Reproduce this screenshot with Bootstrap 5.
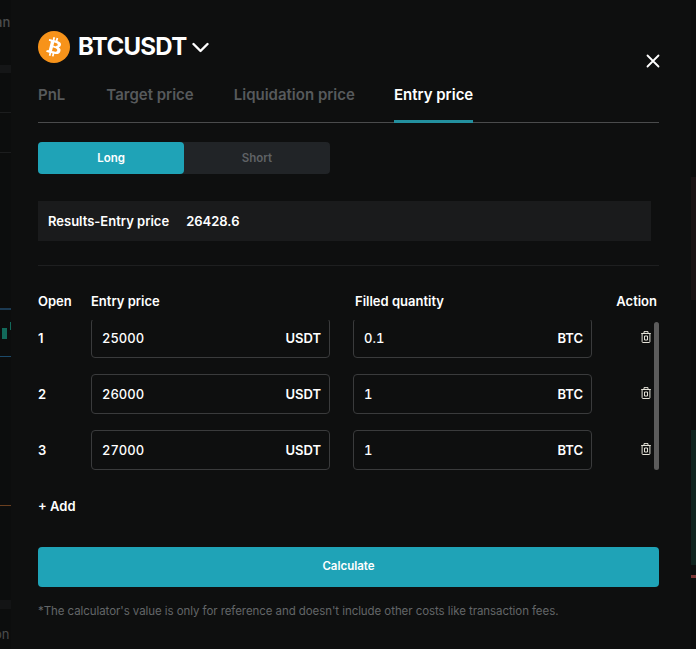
<!DOCTYPE html>
<html lang="en">
<head>
<meta charset="utf-8">
<link href="https://cdn.jsdelivr.net/npm/bootstrap@5.3.0/dist/css/bootstrap.min.css" rel="stylesheet">
<style>
html,body{height:649px;overflow:hidden}
body{background:#0c0d0d;font-family:Inter,"Liberation Sans",sans-serif;color:#fff;font-weight:600;position:relative}
.calc-panel{position:relative;width:680px;height:649px;margin-left:11px;background:#0e0f0f;padding:29px 32px 0 27px}
.behind{position:absolute;display:block}
.bg-an{left:-5px;top:13px;font-size:13px;line-height:18px;color:#4b4c4d;font-weight:500}
.bg-on{left:-6px;top:625px;font-size:13px;line-height:18px;color:#4b4c4d;font-weight:400}
.bg-band-a{left:0;top:65px;width:11px;height:8px;background:#151617}
.bg-line-a{left:0;top:112px;width:11px;height:1px;background:#1c1d1e}
.bg-line-b{left:0;top:152px;width:11px;height:1px;background:#1c1d1e}
.bg-blue-a{left:0;top:308px;width:11px;height:2px;background:#1c3a52}
.bg-blue-b{left:0;top:356px;width:11px;height:1px;background:#1c4a6a}
.bg-candle{left:2px;top:328px;width:5px;height:11px;background:#12695a}
.bg-wick{left:10px;top:322px;width:1px;height:8px;background:#12695a}
.bg-orange{left:0;top:505px;width:11px;height:1px;background:#6a3f1f}
.bg-band-b{left:0;top:600px;width:11px;height:9px;background:#131415}
.bg-red-zone{right:0;top:177px;width:5px;height:123px;background:#1a1314}
.bg-green-zone{right:0;top:430px;width:5px;height:135px;background:#10241f}
.bg-red-tick{right:0;top:575px;width:5px;height:3px;background:#7a3535}
.coin-logo{width:32px;height:32px}
.coin-name{font-size:24px;line-height:36px;font-weight:700;letter-spacing:-.7px;margin:0 0 0 8px}
.close-x{right:-1px;top:25px;background:none;border:0;padding:0;line-height:0}
.panel-head{position:relative}
.tab-row{border-bottom:1px solid #4a4b4c;gap:40px;margin-top:15px;height:43px}
.tab-item{font-size:15px;color:#575a5c;line-height:24px;padding:3px 0 0;height:43px;border-bottom:3px solid transparent;margin-bottom:-1px}
.tab-item:first-child{margin-right:1px}
.tab-item:nth-child(3){margin-right:-1px}
.tab-item.on{color:#fff;border-color:#23909f}
.side-switch{width:292px;height:32px;margin-top:19px;background:#212427;border-radius:4px}
.side-opt{flex:1;font-size:11.500px;line-height:32px;text-align:center;color:#5f6265;border-radius:4px}
.side-opt.on{background:#1fa3b7;color:#fff}
.result-bar{height:40px;width:613px;margin-top:27px;background:#1a1b1c;padding:0 10px;font-size:13px;line-height:40px;gap:17px}
.soft-rule{height:1px;background:#1e1f20;margin-top:24px}
.head-row{font-size:13px;line-height:20px;margin-top:25px}
.col-open{width:53px;flex:none}
.calc-line .col-open{padding-top:2px}
.col-price{width:264px;flex:none}
.col-qty{width:237px;flex:none}
.col-act{flex:1;text-align:right;padding-right:2px}
.rows-box{height:150px;overflow:hidden;position:relative;margin-top:9px}
.calc-line{height:56px;font-size:13px;margin-top:-8px;margin-bottom:8px}
.calc-line:first-child{margin-top:-10px}
.amount-box{height:40px;width:239px;border:1px solid #3a3b3c;border-radius:4px;padding:2px 8px 0 10px;font-weight:500;font-variant-numeric:tabular-nums}
.amount-box b{font-weight:600}
.price-wrap{width:262px;flex:none}
.bin{width:10px;height:12px;margin-left:49px;margin-top:-2px}
.thumb{position:absolute;right:0;top:2px;width:5px;height:148px;background:#5c5c5c;border-radius:3px}
.add-row{font-size:13px;line-height:20px;margin-top:26px}
.calc-btn{display:block;width:621px;height:40px;margin-top:31px;background:#1fa3b7;border:0;border-radius:4px;color:#fff;font-size:11.500px;font-weight:600;padding:0}
.foot-note{font-size:11.500px;font-weight:400;letter-spacing:-.07px;color:#636668;line-height:16px;margin:16px 0 0}
</style>
</head>
<body>
<span class="behind bg-an">an</span>
<span class="behind bg-on">on</span>
<i class="behind bg-band-a"></i><i class="behind bg-line-a"></i><i class="behind bg-line-b"></i>
<i class="behind bg-blue-a"></i><i class="behind bg-blue-b"></i><i class="behind bg-candle"></i><i class="behind bg-wick"></i>
<i class="behind bg-orange"></i><i class="behind bg-band-b"></i>
<i class="behind bg-red-zone"></i><i class="behind bg-green-zone"></i><i class="behind bg-red-tick"></i>
<div class="calc-panel">
  <div class="panel-head">
    <div class="d-flex align-items-center">
      <svg class="coin-logo" viewBox="0 0 32 32"><circle cx="16" cy="16" r="16" fill="#f7931a"/><path fill="#fff" d="M23 14c.3-2.100-1.300-3.200-3.500-4l.7-2.800-1.700-.4-.7 2.700-1.400-.3.700-2.700-1.700-.4-.7 2.800-1.100-.3-2.400-.6-.4 1.800s1.300.3 1.200.3c.7.200.8.600.8 1l-1.900 7.700c-.1.200-.3.500-.8.400 0 0-1.200-.3-1.200-.3l-.8 1.900 2.200.6 1.200.3-.7 2.800 1.700.4.7-2.800 1.400.4-.7 2.700 1.700.4.700-2.800c2.900.5 5.100.3 6-2.300.7-2.100 0-3.300-1.500-4.100 1.100-.3 1.900-1 2.200-2.600zm-3.800 5.400c-.5 2.100-4 1-5.200.7l.9-3.700c1.200.3 4.800.9 4.300 3zm.5-5.400c-.5 1.900-3.400.9-4.300.7l.8-3.300c1 .2 4 .7 3.500 2.600z"/></svg>
      <h1 class="coin-name">BTCUSDT</h1>
      <svg class="ms-1" width="18" height="12" viewBox="0 0 18 12"><path d="M2.500 3l7 7 7-7" fill="none" stroke="#fff" stroke-width="2.400" stroke-linecap="round" stroke-linejoin="round"/></svg>
    </div>
    <button class="close-x position-absolute" aria-label="Close" type="button"><svg width="14" height="14" viewBox="0 0 14 14"><path d="M1.500 1.500l11 11M12.500 1.500l-11 11" stroke="#fff" stroke-width="1.800" stroke-linecap="round"/></svg></button>
    <div class="tab-row d-flex">
      <div class="tab-item">PnL</div>
      <div class="tab-item">Target price</div>
      <div class="tab-item">Liquidation price</div>
      <div class="tab-item on">Entry price</div>
    </div>
  </div>
  <div class="side-switch d-flex">
    <div class="side-opt on">Long</div>
    <div class="side-opt">Short</div>
  </div>
  <div class="result-bar d-flex"><span>Results-Entry price</span><span>26428.6</span></div>
  <div class="soft-rule"></div>
  <div class="head-row d-flex">
    <div class="col-open">Open</div>
    <div class="col-price">Entry price</div>
    <div class="col-qty">Filled quantity</div>
    <div class="col-act">Action</div>
  </div>
  <div class="rows-box">
    <div class="calc-line d-flex align-items-center">
      <div class="col-open">1</div>
      <div class="price-wrap"><div class="amount-box d-flex align-items-center justify-content-between"><span>25000</span><b>USDT</b></div></div>
      <div class="amount-box d-flex align-items-center justify-content-between"><span>0.1</span><b>BTC</b></div>
      <svg class="bin" viewBox="0 0 10 12"><path d="M3 2.500V.6h4v1.900M.2 2.500h9.600M1.100 2.500v8.200q0 .8.800.8h6.200q.8 0 .8-.8V2.500M3.500 5h3v4h-3z" fill="none" stroke="#e4e2d8" stroke-width="1"/></svg>
    </div>
    <div class="calc-line d-flex align-items-center">
      <div class="col-open">2</div>
      <div class="price-wrap"><div class="amount-box d-flex align-items-center justify-content-between"><span>26000</span><b>USDT</b></div></div>
      <div class="amount-box d-flex align-items-center justify-content-between"><span>1</span><b>BTC</b></div>
      <svg class="bin" viewBox="0 0 10 12"><path d="M3 2.500V.6h4v1.900M.2 2.500h9.600M1.100 2.500v8.200q0 .8.800.8h6.200q.8 0 .8-.8V2.500M3.500 5h3v4h-3z" fill="none" stroke="#e4e2d8" stroke-width="1"/></svg>
    </div>
    <div class="calc-line d-flex align-items-center">
      <div class="col-open">3</div>
      <div class="price-wrap"><div class="amount-box d-flex align-items-center justify-content-between"><span>27000</span><b>USDT</b></div></div>
      <div class="amount-box d-flex align-items-center justify-content-between"><span>1</span><b>BTC</b></div>
      <svg class="bin" viewBox="0 0 10 12"><path d="M3 2.500V.6h4v1.900M.2 2.500h9.600M1.100 2.500v8.200q0 .8.800.8h6.200q.8 0 .8-.8V2.500M3.500 5h3v4h-3z" fill="none" stroke="#e4e2d8" stroke-width="1"/></svg>
    </div>
    <div class="thumb"></div>
  </div>
  <div class="add-row">+ Add</div>
  <button class="calc-btn" type="button">Calculate</button>
  <p class="foot-note">*The calculator's value is only for reference and doesn't include other costs like transaction fees.</p>
</div>
<script src="https://cdn.jsdelivr.net/npm/bootstrap@5.3.0/dist/js/bootstrap.bundle.min.js"></script>
</body>
</html>
